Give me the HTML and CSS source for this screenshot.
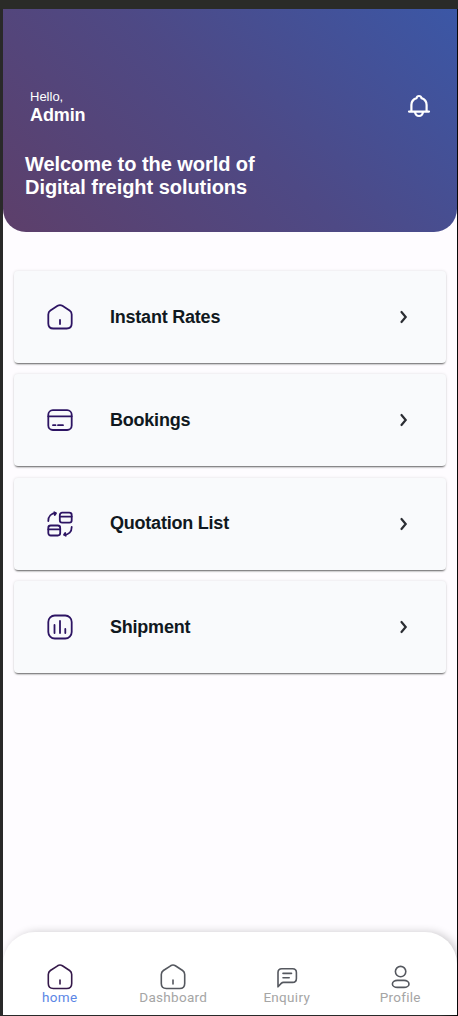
FILE: index.html
```
<!DOCTYPE html>
<html lang="en">
<head>
    <meta charset="UTF-8">
    <meta name="viewport" content="width=device-width, initial-scale=1.0">
    <title>Home</title>
    <link rel="stylesheet" href="styles.css">
</head>
<body>
    <div class="screen">
        <header class="header">
            <div class="user-row">
                <div class="user">
                    <p class="hello">Hello,</p>
                    <p class="user-name">Admin</p>
                </div>
                <svg class="bell" viewBox="0 0 24 24">
                    <path d="M2 17.6H22M4.4 17.3V11C4.4 7.4 6.6 5 9.5 4.1C9.8 2.7 10.7 2 12 2S14.2 2.7 14.5 4.1C17.4 5 19.6 7.4 19.6 11V17.3M8 18.2C8.4 20.7 9.8 22 12 22S15.6 20.7 16 18.2"/>
                </svg>
            </div>
            <h1>Welcome to the world of<br>Digital freight solutions</h1>
        </header>

        <main class="menu">
            <a class="card">
                <svg class="card-icon" viewBox="0 0 26 26">
                    <path d="M10.6 1.8Q13 .3 15.4 1.8L22.6 6.5Q24.7 7.9 24.7 10.4V19.5Q24.7 24.5 19.7 24.5H6.3Q1.3 24.5 1.3 19.5V10.4Q1.3 7.9 3.4 6.5ZM13 16V20"/>
                </svg>
                <span class="card-title">Instant Rates</span>
                <svg class="arrow" viewBox="0 0 10 16"><path d="M2.5 3L6.7 8L2.5 13"/></svg>
            </a>
            <a class="card">
                <svg class="card-icon" viewBox="0 0 26 26">
                    <rect x="1.3" y="3.2" width="23.4" height="19.8" rx="4.5"/>
                    <path d="M1.3 9.3H24.7M6 18.2H8.5M11 18.2H16"/>
                </svg>
                <span class="card-title">Bookings</span>
                <svg class="arrow" viewBox="0 0 10 16"><path d="M2.5 3L6.7 8L2.5 13"/></svg>
            </a>
            <a class="card">
                <svg class="card-icon" viewBox="0 0 26 26">
                    <rect x="12.8" y="1.7" width="11.9" height="10" rx="2.4"/>
                    <rect x="1.3" y="14.5" width="11.9" height="10" rx="2.4"/>
                    <path d="M12.8 5.6H24.7M1.3 18.4H13.2M1.3 10C1.3 5.3 4.2 2.2 9 2.2M7.2 1.3L9 2.2L7.8 4M24.7 16C24.7 20.7 21.8 23.8 17 23.8M18.8 24.7L17 23.8L18.2 22"/>
                </svg>
                <span class="card-title">Quotation List</span>
                <svg class="arrow" viewBox="0 0 10 16"><path d="M2.5 3L6.7 8L2.5 13"/></svg>
            </a>
            <a class="card">
                <svg class="card-icon" viewBox="0 0 26 26">
                    <rect x="1.3" y="1.5" width="23.4" height="23" rx="6.5"/>
                    <path d="M7.5 11V19M13 7V19M18.3 15V19"/>
                </svg>
                <span class="card-title">Shipment</span>
                <svg class="arrow" viewBox="0 0 10 16"><path d="M2.5 3L6.7 8L2.5 13"/></svg>
            </a>
        </main>

        <nav class="tab-bar">
            <a class="tab active">
                <svg class="tab-icon" viewBox="0 0 26 26">
                    <path d="M10.6 1.8Q13 .3 15.4 1.8L22.6 6.5Q24.7 7.9 24.7 10.4V19.5Q24.7 24.5 19.7 24.5H6.3Q1.3 24.5 1.3 19.5V10.4Q1.3 7.9 3.4 6.5ZM13 16V20"/>
                </svg>
                <span>home</span>
            </a>
            <a class="tab">
                <svg class="tab-icon" viewBox="0 0 26 26">
                    <path d="M10.6 1.8Q13 .3 15.4 1.8L22.6 6.5Q24.7 7.9 24.7 10.4V19.5Q24.7 24.5 19.7 24.5H6.3Q1.3 24.5 1.3 19.5V10.4Q1.3 7.9 3.4 6.5ZM13 16V20"/>
                </svg>
                <span>Dashboard</span>
            </a>
            <a class="tab">
                <svg class="tab-icon" viewBox="0 0 26 26">
                    <path d="M4 22.8V8.5Q4 4.7 7.8 4.7H18.6Q22.4 4.7 22.4 8.5V14.5Q22.4 18.4 18.6 18.4H9.5Q8.2 18.4 7.2 19.4ZM9 9.4H17.5M9 13.8H15.2"/>
                </svg>
                <span>Enquiry</span>
            </a>
            <a class="tab">
                <svg class="tab-icon" viewBox="0 0 26 26">
                    <circle cx="13.6" cy="7.6" r="5.2"/>
                    <rect x="5.4" y="16.4" width="16.6" height="7" rx="5" ry="3.5"/>
                </svg>
                <span>Profile</span>
            </a>
        </nav>
    </div>
</body>
</html>
```
FILE: styles.css
```
* {
    box-sizing: border-box;
}
body {
    margin: 0;
    height: 1016px;
    padding: 0 1px 1px 3px;
    border-top: 9px solid #2a2b28;
    background: linear-gradient(to right, #292929 440px, #080808 457px);
    font-family: "Liberation Sans", Arial, sans-serif;
}
.screen {
    display: flex;
    flex-direction: column;
    height: 1006px;
    overflow: hidden;
    background: #fefcff;
}
.header {
    height: 223px;
    padding: 80px 26px 0 22px;
    border-radius: 0 0 23px 23px;
    background: linear-gradient(45deg, #5d3f6a, #4e4985 50%, #3b57a6);
    color: #fff;
}
.user-row {
    display: flex;
    justify-content: space-between;
    padding-left: 5px;
}
.hello,
.user-name {
    margin: 0;
}
.hello {
    font-size: 13px;
    line-height: 16px;
}
.user-name {
    font-size: 18px;
    font-weight: bold;
    line-height: 20px;
    letter-spacing: -0.1px;
}
.bell {
    width: 24px;
    height: 24px;
    margin-top: 5px;
    fill: none;
    stroke: #fff;
    stroke-width: 2.2;
    stroke-linecap: round;
}
h1 {
    margin: 28px 0 0;
    font-size: 20px;
    line-height: 23px;
    letter-spacing: -0.05px;
}
.menu {
    display: flex;
    flex-direction: column;
    gap: 11.4px;
    padding: 39px 11px 0;
}
.card {
    display: flex;
    align-items: center;
    height: 92px;
    padding: 0 37px 0 33px;
    border-radius: 4px;
    background: #f9fafc;
    box-shadow: 0 2px 2px -1px rgba(0, 0, 0, 0.6), 0 0 3px rgba(0, 0, 0, 0.13);
}
.card-icon {
    width: 26px;
    height: 26px;
    fill: none;
    stroke: #2d1463;
    stroke-width: 1.8;
    stroke-linecap: round;
    stroke-linejoin: round;
}
.card-title {
    flex: 1;
    margin-left: 37px;
    color: #101820;
    font-size: 18px;
    font-weight: bold;
    letter-spacing: -0.22px;
}
.arrow {
    width: 10px;
    height: 16px;
    fill: none;
    stroke: #2b2d33;
    stroke-width: 2.2;
    stroke-linecap: round;
}
.tab-bar {
    display: flex;
    height: 83px;
    margin-top: auto;
    padding-top: 32px;
    border-radius: 32px 32px 0 0;
    background: #fff;
    box-shadow: 3px 0 9px rgba(0, 0, 0, 0.2);
}
.tab {
    display: flex;
    flex: 1;
    flex-direction: column;
    align-items: center;
    color: #a5a5a5;
    font-family: Roboto, sans-serif;
    font-size: 13.5px;
    line-height: 15px;
    letter-spacing: 0.3px;
}
.tab-icon {
    width: 26px;
    height: 26px;
    fill: none;
    stroke: #55585f;
    stroke-width: 1.6;
    stroke-linecap: round;
    stroke-linejoin: round;
}
.active {
    color: #5b86e5;
}
.active .tab-icon {
    stroke: #35194a;
}
```
